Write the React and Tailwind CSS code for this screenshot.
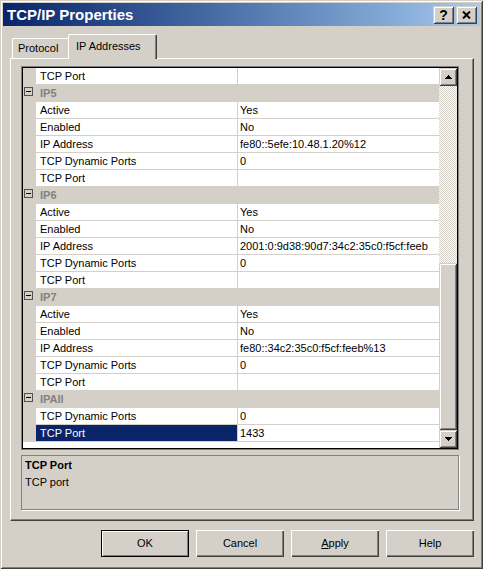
import React from "react";

const rows = [
  { n: "TCP Port", v: "" },
  { cat: "IP5" },
  { n: "Active", v: "Yes" },
  { n: "Enabled", v: "No" },
  { n: "IP Address", v: "fe80::5efe:10.48.1.20%12" },
  { n: "TCP Dynamic Ports", v: "0" },
  { n: "TCP Port", v: "" },
  { cat: "IP6" },
  { n: "Active", v: "Yes" },
  { n: "Enabled", v: "No" },
  { n: "IP Address", v: "2001:0:9d38:90d7:34c2:35c0:f5cf:feeb" },
  { n: "TCP Dynamic Ports", v: "0" },
  { n: "TCP Port", v: "" },
  { cat: "IP7" },
  { n: "Active", v: "Yes" },
  { n: "Enabled", v: "No" },
  { n: "IP Address", v: "fe80::34c2:35c0:f5cf:feeb%13" },
  { n: "TCP Dynamic Ports", v: "0" },
  { n: "TCP Port", v: "" },
  { cat: "IPAll" },
  { n: "TCP Dynamic Ports", v: "0" },
  { n: "TCP Port", v: "1433", sel: true },
];

function MinusBox() {
  return (
    <div className="w-[9px] h-[9px] border border-[#505050] flex items-center justify-center">
      <div className="w-[5px] h-[1px] bg-black" />
    </div>
  );
}

function PropRow({ r }) {
  if (r.cat) {
    return (
      <div className="flex h-[17px] bg-[#d4d0c8]">
        <div className="w-[13px] pt-[2px] pl-[1px]">
          <MinusBox />
        </div>
        <div className="pl-[4px] font-bold text-[#808080] leading-[17px]">{r.cat}</div>
      </div>
    );
  }
  return (
    <div className="flex h-[17px]">
      <div className="w-[13px] bg-[#d4d0c8]" />
      <div
        className={
          r.sel
            ? "w-[202px] border-r border-b border-[#d4d0c8] pl-[4px] leading-[16px] whitespace-nowrap overflow-hidden bg-[#0a246a] text-white"
            : "w-[202px] border-r border-b border-[#d4d0c8] pl-[4px] leading-[16px] whitespace-nowrap overflow-hidden bg-white text-black"
        }
      >
        {r.n}
      </div>
      <div className="flex-1 bg-white border-b border-[#d4d0c8] pl-[2px] leading-[16px] whitespace-nowrap overflow-hidden">
        {r.v}
      </div>
    </div>
  );
}

function Arrow({ up }) {
  return (
    <svg width="7" height="4" viewBox="0 0 7 4" shapeRendering="crispEdges">
      {up ? <polygon points="3.5,0 7,4 0,4" fill="#000" /> : <polygon points="0,0 7,0 3.5,4" fill="#000" />}
    </svg>
  );
}

export default function App() {
  return (
    <div className="w-[483px] h-[569px] bg-[#d4d0c8] p-[3px] flex flex-col text-[11px] text-black font-['Liberation_Sans',Arial,sans-serif] shadow-[inset_1px_1px_0_#d4d0c8,inset_-1px_-1px_0_#404040,inset_2px_2px_0_#fff,inset_-2px_-2px_0_#808080]">
      {/* Title bar */}
      <div className="h-[23px] bg-linear-to-r from-[#0a246a] to-[#a6caf0] flex items-center pl-[4px] pr-[3px]">
        <span className="flex-1 text-white font-bold text-[15px] leading-[23px]">TCP/IP Properties</span>
        <div className="flex gap-[2px]">
          <div className="w-[21px] h-[18px] bg-[#d4d0c8] flex items-center justify-center font-bold text-[14px] leading-none shadow-[inset_1px_1px_0_#d4d0c8,inset_-1px_-1px_0_#404040,inset_2px_2px_0_#fff,inset_-2px_-2px_0_#808080]">
            ?
          </div>
          <div className="w-[21px] h-[18px] bg-[#d4d0c8] flex items-center justify-center shadow-[inset_1px_1px_0_#d4d0c8,inset_-1px_-1px_0_#404040,inset_2px_2px_0_#fff,inset_-2px_-2px_0_#808080]">
            <svg width="9" height="8" viewBox="0 0 9 8">
              <path d="M1 0.5 L8 7.5 M8 0.5 L1 7.5" stroke="#000" strokeWidth="2" />
            </svg>
          </div>
        </div>
      </div>

      {/* Tabs + panel */}
      <div className="pl-[7px] pt-[8px]">
        <div className="flex items-end h-[24px]">
          <div className="ml-[2px] w-[58px] h-[20px] border-l border-t border-white border-r border-r-[#404040] rounded-tl-[2px] shadow-[inset_-1px_0_0_#808080] pl-[5px] leading-[19px]">
            Protocol
          </div>
          <div className="-ml-[2px] relative z-10 w-[89px] h-[25px] -mb-[1px] bg-[#d4d0c8] border-l border-t border-white border-r border-r-[#404040] rounded-t-[2px] shadow-[inset_-1px_0_0_#808080] pl-[7px] leading-[22px]">
            IP Addresses
          </div>
        </div>
        <div className="w-[464px] h-[463px] border-l border-t border-white border-r border-b border-r-[#404040] border-b-[#404040] shadow-[inset_-1px_-1px_0_#808080] pl-[10px] pt-[7px] flex flex-col">
          {/* Property grid */}
          <div className="w-[438px] h-[384px] border border-[#808080]">
            <div className="w-full h-full border border-black flex">
              <div className="w-[416px] flex flex-col bg-white">
                {rows.map((r, i) => (
                  <PropRow key={i} r={r} />
                ))}
                <div className="flex-1 bg-white" />
              </div>
              <div className="w-[18px] flex flex-col">
                <div className="h-[18px] bg-[#d4d0c8] flex items-center justify-center shadow-[inset_1px_1px_0_#d4d0c8,inset_-1px_-1px_0_#404040,inset_2px_2px_0_#fff,inset_-2px_-2px_0_#808080]">
                  <Arrow up />
                </div>
                <div className="h-[177px] bg-[image:repeating-conic-gradient(#d4d0c8_0%_25%,#ffffff_0%_50%)] bg-[length:2px_2px]" />
                <div className="flex-1 bg-[#d4d0c8] shadow-[inset_1px_1px_0_#d4d0c8,inset_-1px_-1px_0_#404040,inset_2px_2px_0_#fff,inset_-2px_-2px_0_#808080]" />
                <div className="h-[18px] bg-[#d4d0c8] flex items-center justify-center shadow-[inset_1px_1px_0_#d4d0c8,inset_-1px_-1px_0_#404040,inset_2px_2px_0_#fff,inset_-2px_-2px_0_#808080]">
                  <Arrow />
                </div>
              </div>
            </div>
          </div>
          {/* Description */}
          <div className="mt-[5px] w-[438px] h-[55px] border border-[#808080] shadow-[1px_1px_0_#fff] pl-[3px] pt-[1px]">
            <div className="font-bold leading-[17px]">TCP Port</div>
            <div className="leading-[17px]">TCP port</div>
          </div>
        </div>
      </div>

      {/* Buttons */}
      <div className="flex justify-end gap-[7px] pr-[6px] mt-[9px]">
        <button className="w-[88px] h-[27px] bg-[#d4d0c8] border border-black shadow-[inset_1px_1px_0_#fff,inset_-1px_-1px_0_#808080]">
          OK
        </button>
        <button className="w-[88px] h-[27px] bg-[#d4d0c8] shadow-[inset_1px_1px_0_#fff,inset_-1px_-1px_0_#404040,inset_-2px_-2px_0_#808080]">
          Cancel
        </button>
        <button className="w-[88px] h-[27px] bg-[#d4d0c8] shadow-[inset_1px_1px_0_#fff,inset_-1px_-1px_0_#404040,inset_-2px_-2px_0_#808080]">
          <span className="underline">A</span>pply
        </button>
        <button className="w-[88px] h-[27px] bg-[#d4d0c8] shadow-[inset_1px_1px_0_#fff,inset_-1px_-1px_0_#404040,inset_-2px_-2px_0_#808080]">
          Help
        </button>
      </div>
    </div>
  );
}
